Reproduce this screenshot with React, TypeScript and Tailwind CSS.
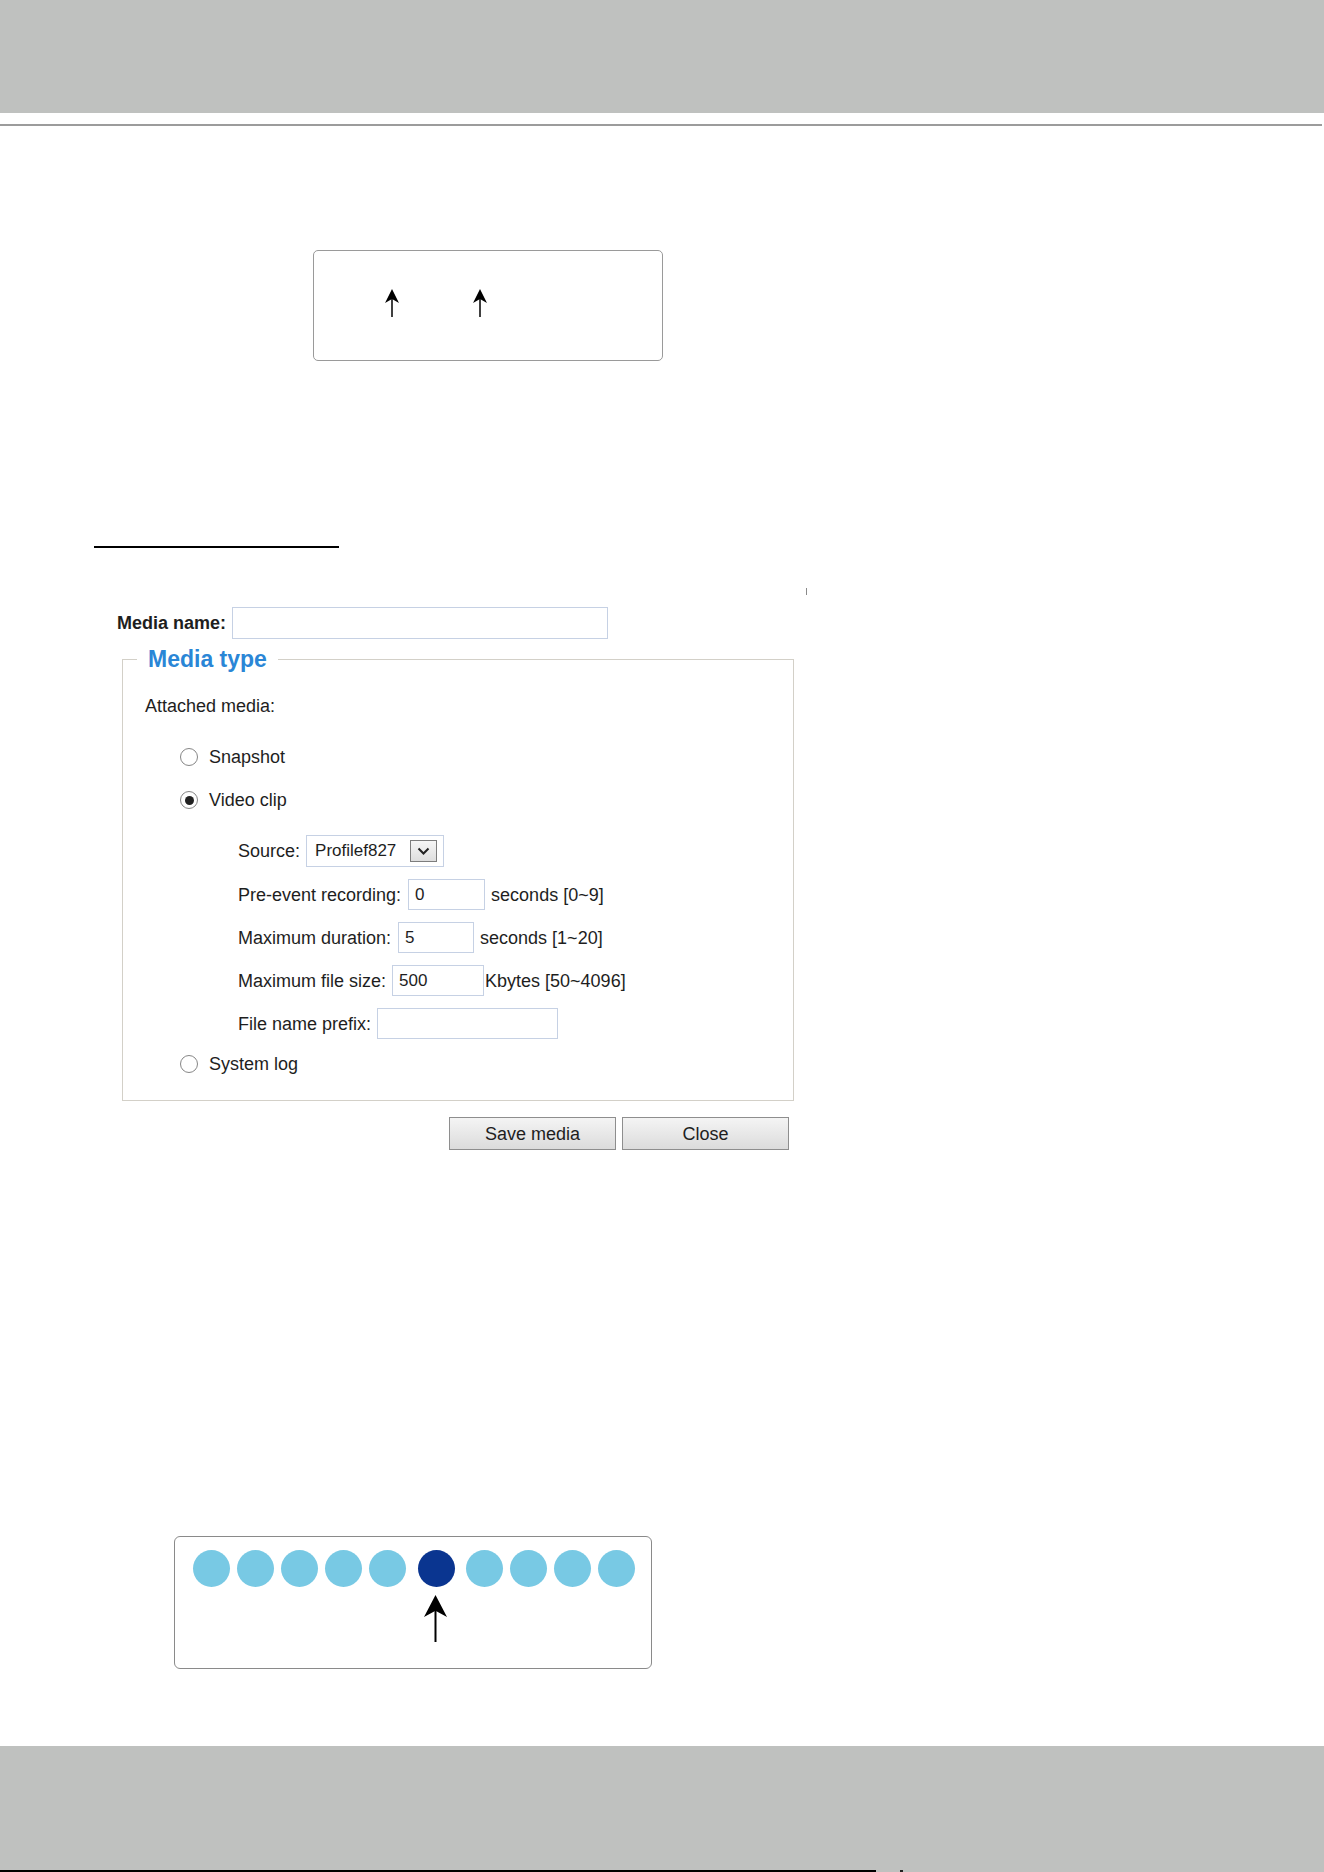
import React from "react";

// small up-pointing arrow with a barbed head
function UpArrow({ w, h, head, stroke }: { w: number; h: number; head: number; stroke: number }) {
  const c = w / 2;
  return (
    <svg width={w} height={h} viewBox={`0 0 ${w} ${h}`} className="block">
      <path d={`M${c} 0 L${w} ${head} L${c} ${head * 0.72} L0 ${head} Z`} fill="#000" />
      <line x1={c} y1={head * 0.6} x2={c} y2={h} stroke="#000" strokeWidth={stroke} />
    </svg>
  );
}

function Radio({ checked, label }: { checked?: boolean; label: string }) {
  return (
    <div className="flex items-center h-[22px] ml-[35px]">
      <span className="w-[18px] h-[18px] rounded-full border border-[#868686] bg-white flex items-center justify-center">
        {checked && <span className="w-[9px] h-[9px] rounded-full bg-[#222]" />}
      </span>
      <span className="ml-[11px]">{label}</span>
    </div>
  );
}

function TextBox({ value, width }: { value?: string; width: string }) {
  return (
    <div
      className={`${width} h-[31px] border border-[#c6d1e4] bg-white flex items-center pl-[6px] text-[17px]`}
    >
      {value}
    </div>
  );
}

export default function App() {
  return (
    <div className="w-[1324px] h-[1872px] bg-white flex flex-col font-['Liberation_Sans',Arial,sans-serif] text-[#1e1e1e] overflow-hidden">
      {/* Top band */}
      <header className="h-[113px] shrink-0 bg-[#bfc1bf]" />
      <div className="mt-[11px] h-[2px] w-[1322px] bg-[#9c9c9c]" />

      {/* Frame with two markers */}
      <div className="ml-[313px] mt-[124px] w-[350px] h-[111px] shrink-0 rounded-[5px] border-[1.5px] border-[#9a9a9a]">
        <div className="flex pl-[71px] pt-[38px] gap-[74px]">
          <UpArrow w={14} h={28} head={14} stroke={1.5} />
          <UpArrow w={14} h={28} head={14} stroke={1.5} />
        </div>
      </div>

      <div className="ml-[94px] mt-[185px] w-[245px] h-[2px] bg-black" />

      {/* Media settings form */}
      <div className="relative ml-[117px] w-[690px] text-[18px] leading-[22px]">
        <span className="absolute right-0 top-[40px] w-px h-[7px] bg-[#8a8a8a]" />

        <div className="mt-[59px] flex items-center h-[32px]">
          <span className="font-bold">Media name:</span>
          <div className="ml-[6px] w-[376px] h-[32px] border border-[#c6d1e4] bg-white" />
        </div>

        <fieldset className="mt-[7px] ml-[5px] w-[672px] border-[1.5px] border-[#d3d0c8] pb-[25px]">
          <legend className="ml-[14px] px-[11px] text-[23px] leading-[26px] font-bold text-[#2a86d6]">
            Media type
          </legend>
          <div className="pl-[22px] pt-[23px] flex flex-col">
            <div className="h-[22px]">Attached media:</div>

            <div className="mt-[29px]">
              <Radio label="Snapshot" />
            </div>
            <div className="mt-[21px]">
              <Radio checked label="Video clip" />
            </div>

            <div className="ml-[93px] mt-[24px] flex flex-col gap-[12px]">
              <div className="flex items-center h-[32px]">
                <span>Source:</span>
                <div className="ml-[6px] w-[138px] h-[32px] border border-[#c6d1e4] bg-white flex items-center justify-between pl-[8px] pr-[6px]">
                  <span className="text-[17px]">Profilef827</span>
                  <span className="w-[27px] h-[22px] border border-[#7d7d7d] bg-gradient-to-b from-[#f6f6f6] to-[#dedede] flex items-center justify-center">
                    <svg width="13" height="9" viewBox="0 0 13 9">
                      <path d="M1.5 1.5 L6.5 6.5 L11.5 1.5" fill="none" stroke="#222" strokeWidth="2" />
                    </svg>
                  </span>
                </div>
              </div>

              <div className="flex items-center h-[31px]">
                <span>Pre-event recording:</span>
                <div className="ml-[7px]">
                  <TextBox value="0" width="w-[77px]" />
                </div>
                <span className="ml-[6px]">seconds [0~9]</span>
              </div>

              <div className="flex items-center h-[31px]">
                <span>Maximum duration:</span>
                <div className="ml-[7px]">
                  <TextBox value="5" width="w-[76px]" />
                </div>
                <span className="ml-[6px]">seconds [1~20]</span>
              </div>

              <div className="flex items-center h-[31px]">
                <span>Maximum file size:</span>
                <div className="ml-[6px]">
                  <TextBox value="500" width="w-[92px]" />
                </div>
                <span className="ml-[1px]">Kbytes [50~4096]</span>
              </div>

              <div className="flex items-center h-[31px]">
                <span>File name prefix:</span>
                <div className="ml-[6px]">
                  <TextBox width="w-[181px]" />
                </div>
              </div>
            </div>

            <div className="mt-[14px]">
              <Radio label="System log" />
            </div>
          </div>
        </fieldset>

        <div className="mt-[16px] ml-[332px] flex gap-[6px]">
          <button className="w-[167px] h-[33px] border border-[#8e8e8e] bg-gradient-to-b from-[#f4f4f4] to-[#dcdcdc] text-[18px]">
            Save media
          </button>
          <button className="w-[167px] h-[33px] border border-[#8e8e8e] bg-gradient-to-b from-[#f4f4f4] to-[#dcdcdc] text-[18px]">
            Close
          </button>
        </div>
      </div>

      {/* Frame with a row of dots */}
      <div className="ml-[174px] mt-[386px] w-[478px] h-[133px] shrink-0 rounded-[6px] border-[1.5px] border-[#8a8a8a]">
        <div className="flex items-center pl-[18px] pt-[13px] gap-[7px]">
          {Array.from({ length: 10 }).map((_, i) =>
            i === 5 ? (
              <span key={i} className="mx-[4.5px] w-[37px] h-[37px] rounded-full bg-[#0a3590]" />
            ) : (
              <span key={i} className="w-[37px] h-[37px] rounded-full bg-[#78c9e4]" />
            )
          )}
        </div>
        <div className="ml-[249px] mt-[8px]">
          <UpArrow w={23} h={47} head={22} stroke={2} />
        </div>
      </div>

      {/* Bottom band */}
      <footer className="mt-auto h-[126px] shrink-0 bg-[#bfc1bf] flex flex-col justify-end">
        <div className="flex h-[2px]">
          <div className="w-[876px] bg-black" />
          <div className="ml-[24px] w-[3px] bg-[#222]" />
        </div>
      </footer>
    </div>
  );
}
